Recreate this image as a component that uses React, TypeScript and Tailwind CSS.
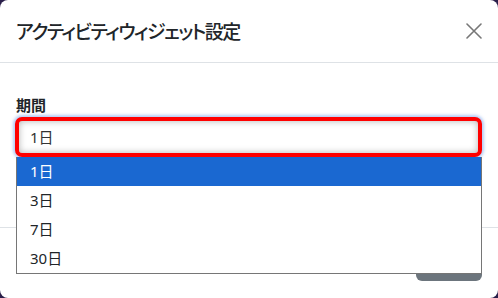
const periods = ["1日", "3日", "7日", "30日"];

const jp = "font-['Noto_Sans','Noto_Sans_CJK_JP',sans-serif]";

function CloseIcon() {
  return (
    <svg width="16" height="16" viewBox="0 0 16 16" fill="none" stroke="currentColor" strokeWidth="1.6" strokeLinecap="round">
      <path d="M1 1L15 15M15 1L1 15" />
    </svg>
  );
}

export default function App() {
  const selected = "1日";

  return (
    <div className="h-[298px] w-[498px] bg-[#2a1f4a]">
      <div className={`relative flex h-full flex-col rounded-[8px] bg-white text-[#212529] ${jp}`}>
        {/* header */}
        <div className="flex h-[63px] shrink-0 items-center justify-between border-b border-[#dee2e6] pl-4 pr-4">
          <h5 className="font-['Noto_Sans_CJK_JP',sans-serif] text-[19px] font-medium leading-[30px] tracking-[-1.5px] [font-feature-settings:'palt']">
            アクティビティウィジェット設定
          </h5>
          <button aria-label="閉じる" className="grid h-[16px] w-[16px] place-items-center text-[#777]">
            <CloseIcon />
          </button>
        </div>

        {/* body */}
        <div className="flex-1 px-[15px] pt-[31px]">
          <label className="block pl-px text-[15px] font-semibold leading-[23px]">期間</label>
          <div className="flex h-[40px] w-[467px] items-center rounded-[7px] border-4 border-[#ff0000] bg-white pl-[11px] text-[15px] text-[#333] shadow-[0_0_3px_2px_rgba(110,155,235,0.5),inset_0_0_7px_rgba(0,0,0,0.3)]">
            {selected}
          </div>
        </div>

        {/* footer */}
        <div className="flex h-[71px] shrink-0 items-start justify-end border-t border-[#dee2e6] pr-4 pt-[15px]">
          <button className="h-[38px] w-[66px] rounded-[6px] bg-[#6c757d] text-[15px] text-white">
            閉じる
          </button>
        </div>

        {/* open select list */}
        <ul className="absolute left-[16px] top-[157px] w-[466px] border border-t-0 border-[#767676] bg-white">
          {periods.map((p) => (
            <li
              key={p}
              className={
                p === selected
                  ? "flex h-[29px] items-center bg-[#1a68d1] pl-[13px] text-[15px] text-white"
                  : "flex h-[29px] items-center pl-[13px] text-[15px] text-[#212529]"
              }
            >
              {p}
            </li>
          ))}
        </ul>
      </div>
    </div>
  );
}
